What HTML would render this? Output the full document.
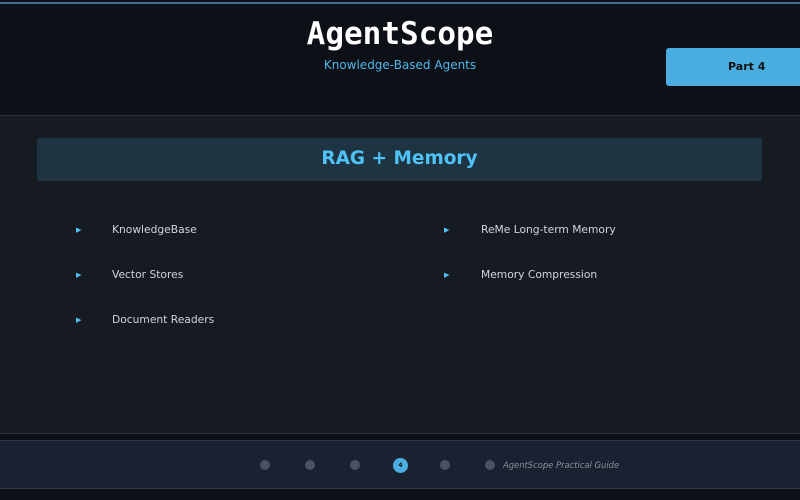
<!DOCTYPE html>
<html><head><style>
*{margin:0;padding:0;box-sizing:border-box}
body{width:800px;height:500px;background:#0d1017;position:relative;overflow:hidden;font-family:"DejaVu Sans","Liberation Sans",sans-serif}
.abs{position:absolute}
</style></head><body>
<div class="abs" style="left:0;top:2px;width:800px;height:2px;background:#3d6f8e"></div>
<div class="abs" style="left:0;top:4px;width:800px;height:111px;background:#0d1017"></div>
<div class="abs" style="left:0;top:16px;width:800px;text-align:center;font-family:'DejaVu Sans Mono','Liberation Mono',monospace;font-weight:bold;font-size:31px;color:#fff">AgentScope</div>
<div class="abs" style="left:0;top:58px;width:800px;text-align:center;font-size:12px;color:#4fb8e8">Knowledge-Based Agents</div>
<div class="abs" style="left:666px;top:48px;width:140px;height:38px;background:#4aaee0;border-radius:3px;font-weight:bold;font-size:11px;color:#111;line-height:38px;padding-left:62px">Part 4</div>
<div class="abs" style="left:0;top:115px;width:800px;height:1px;background:#2a313b"></div>
<div class="abs" style="left:0;top:116px;width:800px;height:317px;background:#161b22"></div>
<div class="abs" style="left:37px;top:138px;width:725px;height:43px;background:#1e3442;border-radius:2px;text-align:center;line-height:42px;font-size:18.5px;font-weight:bold;color:#4fc3f7">RAG + Memory</div>
<div class="abs" style="left:76px;top:222px;font-size:7px;color:#4fc3f7;line-height:16px">▶</div>
<div class="abs" style="left:112px;top:222px;font-size:10.7px;color:#d0d4da;line-height:16px">KnowledgeBase</div>
<div class="abs" style="left:76px;top:267px;font-size:7px;color:#4fc3f7;line-height:16px">▶</div>
<div class="abs" style="left:112px;top:267px;font-size:10.7px;color:#d0d4da;line-height:16px">Vector Stores</div>
<div class="abs" style="left:76px;top:312px;font-size:7px;color:#4fc3f7;line-height:16px">▶</div>
<div class="abs" style="left:112px;top:312px;font-size:10.7px;color:#d0d4da;line-height:16px">Document Readers</div>
<div class="abs" style="left:444px;top:222px;font-size:7px;color:#4fc3f7;line-height:16px">▶</div>
<div class="abs" style="left:481px;top:222px;font-size:10.7px;color:#d0d4da;line-height:16px">ReMe Long-term Memory</div>
<div class="abs" style="left:444px;top:267px;font-size:7px;color:#4fc3f7;line-height:16px">▶</div>
<div class="abs" style="left:481px;top:267px;font-size:10.7px;color:#d0d4da;line-height:16px">Memory Compression</div>
<div class="abs" style="left:0;top:433px;width:800px;height:1px;background:#2e353f"></div>
<div class="abs" style="left:0;top:440px;width:800px;height:49px;background:#1a2130;border-top:1px solid #2e3644;border-bottom:1px solid #2e3644"></div>
<div class="abs" style="left:260px;top:460px;width:10px;height:10px;border-radius:50%;background:#4a5262"></div>
<div class="abs" style="left:305px;top:460px;width:10px;height:10px;border-radius:50%;background:#4a5262"></div>
<div class="abs" style="left:350px;top:460px;width:10px;height:10px;border-radius:50%;background:#4a5262"></div>
<div class="abs" style="left:393px;top:458px;width:15px;height:15px;border-radius:50%;background:#4aaee0;font-size:6px;font-weight:bold;color:#111;text-align:center;line-height:15px">4</div>
<div class="abs" style="left:440px;top:460px;width:10px;height:10px;border-radius:50%;background:#4a5262"></div>
<div class="abs" style="left:485px;top:460px;width:10px;height:10px;border-radius:50%;background:#4a5262"></div>
<div class="abs" style="left:503px;top:458px;font-size:8.4px;font-style:italic;color:#8a919c;line-height:14px">AgentScope Practical Guide</div>
</body></html>
